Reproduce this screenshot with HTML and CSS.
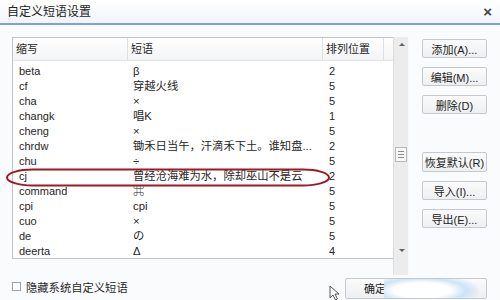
FILE: index.html
```html
<!doctype html>
<html>
<head>
<meta charset="utf-8">
<title>自定义短语设置</title>
<link rel="stylesheet" href="styles.css">
</head>
<body>
<div class="dlg">
  <div class="title">自定义短语设置<span class="close">×</span></div>

  <div class="main">
    <div class="list">
      <div class="grid">
        <div class="head">
          <span class="c1">缩写</span><span class="c2">短语</span><span class="c3">排列位置</span><span class="c4"></span>
        </div>
        <div class="rows">
          <div class="row"><span class="c1">beta</span><span class="c2">β</span><span class="c3">2</span></div>
          <div class="row"><span class="c1">cf</span><span class="c2">穿越火线</span><span class="c3">5</span></div>
          <div class="row"><span class="c1">cha</span><span class="c2">×</span><span class="c3">5</span></div>
          <div class="row"><span class="c1">changk</span><span class="c2">唱K</span><span class="c3">1</span></div>
          <div class="row"><span class="c1">cheng</span><span class="c2">×</span><span class="c3">5</span></div>
          <div class="row"><span class="c1">chrdw</span><span class="c2">锄禾日当午，汗滴禾下土。谁知盘...</span><span class="c3">2</span></div>
          <div class="row"><span class="c1">chu</span><span class="c2">÷</span><span class="c3">5</span></div>
          <div class="row"><span class="c1">cj</span><span class="c2">曾经沧海难为水，除却巫山不是云</span><span class="c3">2</span></div>
          <div class="row"><span class="c1">command</span><span class="c2">⌘</span><span class="c3">5</span></div>
          <div class="row"><span class="c1">cpi</span><span class="c2">cpi</span><span class="c3">5</span></div>
          <div class="row"><span class="c1">cuo</span><span class="c2">×</span><span class="c3">5</span></div>
          <div class="row"><span class="c1">de</span><span class="c2">の</span><span class="c3">5</span></div>
          <div class="row"><span class="c1">deerta</span><span class="c2">Δ</span><span class="c3">4</span></div>
        </div>
      </div>
      <div class="scroll">
        <span class="arr up"></span>
        <span class="thumb"><i></i><i></i><i></i></span>
        <span class="arr down"></span>
      </div>
    </div>

    <div class="side">
      <button class="btn">添加(A)...</button>
      <button class="btn">编辑(M)...</button>
      <button class="btn">删除(D)</button>
      <button class="btn gap">恢复默认(R)</button>
      <button class="btn">导入(I)...</button>
      <button class="btn">导出(E)...</button>
    </div>
  </div>

  <div class="foot">
    <label class="chk"><span class="box"></span>隐藏系统自定义短语</label>
    <svg class="cursor" width="12" height="16" viewBox="0 0 12 16">
      <path d="M1 1 L1 13 L4 10 L6.5 15 L8.5 14 L6 9 L10 9 Z" fill="#fff" stroke="#555" stroke-width="1"/>
    </svg>
    <button class="btn ok">确定<span class="glare"></span></button>
  </div>

  <svg class="mark" width="500" height="300">
    <rect x="7" y="169.5" width="322" height="16" rx="26" ry="8" fill="none" stroke="#9c1a26" stroke-width="2"/>
  </svg>
</div>
</body>
</html>
```

FILE: styles.css
```css
*{ margin:0; padding:0; box-sizing:border-box; }
body{ width:500px; height:300px; overflow:hidden; background:#fafbfd; font:11px "Liberation Sans","Noto Sans CJK SC",sans-serif; color:#262626; }

.dlg{ position:relative; width:500px; height:300px; }

.title{ height:25px; padding-left:7px; line-height:24px; font-size:12px; color:#222;
  background:linear-gradient(#ffffff,#f1f4f8); border-bottom:2px solid #7fa0d8; position:relative; }
.close{ position:absolute; right:8px; top:0; font-size:15px; font-weight:bold; color:#444; }

.main{ display:flex; padding-left:12px; margin-top:12px; }

.list{ display:flex; align-items:flex-start; }
.grid{ width:381px; height:222px; border:1px solid #c3c3c3; border-right:none; background:#fff; overflow:hidden; }
.head{ display:flex; height:23px; line-height:23px; background:linear-gradient(#ffffff,#f3f4f6); border-bottom:1px solid #e2e4e8; }
.head span{ border-right:1px solid #dcdfe4; padding-left:3px; }
.c1{ width:115px; }
.c2{ width:195px; }
.c3{ width:61px; }
.c4{ flex:1; border-right:none !important; }
.rows{ padding-top:3px; }
.row{ display:flex; height:15px; line-height:15px; }
.row span{ padding-left:6px; white-space:nowrap; overflow:hidden; }
.row .c2{ padding-left:5px; font-size:11.3px; }

.scroll{ position:relative; width:16px; height:238px; background:#ececec; border-left:1px solid #dedede; border-right:1px solid #f8f8f8; }
.arr{ position:absolute; left:5px; width:0; height:0; border-left:3px solid transparent; border-right:3px solid transparent; }
.up{ top:6px; border-bottom:3px solid #606060; }
.down{ top:212px; border-top:3px solid #606060; }
.thumb{ position:absolute; left:1px; top:110px; width:12px; height:15px; border:1px solid #b8b8b8; background:#f6f6f6;
  display:flex; flex-direction:column; justify-content:center; gap:2px; padding:0 2px; }
.thumb i{ display:block; height:1px; background:#8a8a8a; }

.side{ display:flex; flex-direction:column; gap:9px; margin-left:13px; margin-top:2px; }
.btn{ width:65px; height:19px; font:11px "Liberation Sans","Noto Sans CJK SC",sans-serif; color:#222;
  border:1px solid #c4c8cf; border-radius:2px; background:linear-gradient(#fbfbfb,#eeeff1); }
.gap{ margin-top:29px; height:20px; }

.foot{ position:relative; display:flex; align-items:center; height:25px; padding-left:12px; }
.chk{ display:flex; align-items:center; gap:5px; font-size:11.3px; color:#2a2a2a; margin-top:-2px; }
.box{ width:9px; height:9px; border:1px solid #9aa0a8; background:#fff; }
.cursor{ position:absolute; left:329px; top:10px; }
.ok{ position:relative; width:142px; height:21px; margin-left:auto; margin-right:13px; margin-top:1px;
  text-align:left; padding-left:18px; overflow:hidden; }
.glare{ position:absolute; left:38px; top:-4px; width:95px; height:28px;
  background:radial-gradient(ellipse at 40% 55%, #ffffff 35%, rgba(200,225,245,.9) 55%, rgba(255,255,255,0) 75%); }

.mark{ position:absolute; left:0; top:0; pointer-events:none; }
```
